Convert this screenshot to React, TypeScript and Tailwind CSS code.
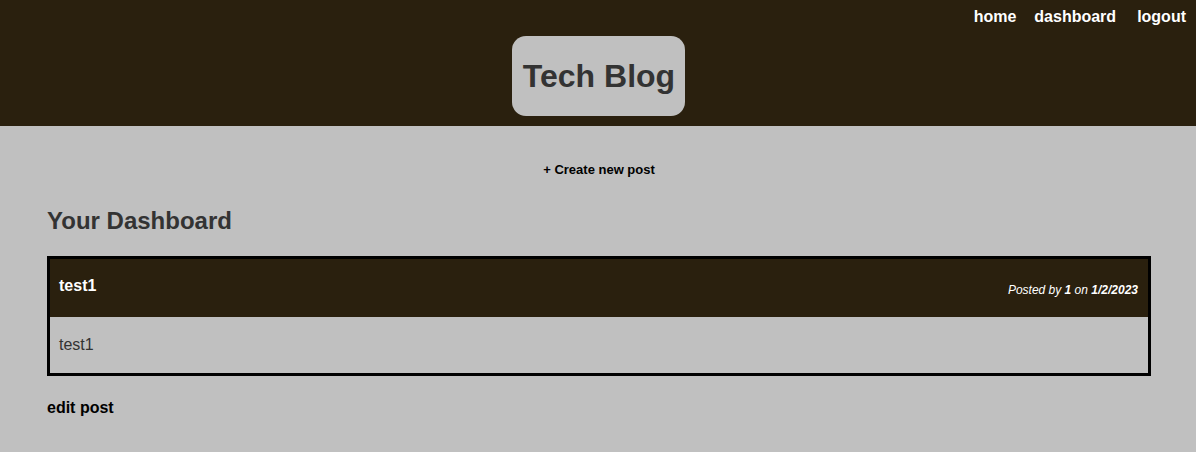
export default function App() {
  return (
    <div className="min-h-[452px] bg-[#c0c0c0] font-['Liberation_Sans',Arial,sans-serif]">
      {/* Header */}
      <header className="relative h-[126px] bg-[#2a200e] flex justify-center">
        <nav className="absolute right-[10px] top-[7px] flex text-[16px] font-bold text-white leading-[20px]">
          <a className="ml-[18px]">home</a>
          <a className="ml-[18px]">dashboard</a>
          <a className="ml-[21px]">logout</a>
        </nav>
        <div className="mt-[36px] h-[80px] w-[173px] rounded-[14px] bg-[#c0c0c0] flex items-center justify-center pl-[2px]">
          <h1 className="text-[32px] font-bold text-[#333] leading-none">Tech Blog</h1>
        </div>
      </header>

      {/* Body */}
      <main className="pl-[47px] pr-[45px] pt-[34px]">
        <div className="flex justify-center">
          <a className="text-[13px] font-bold text-black leading-[20px]">+ Create new post</a>
        </div>
        <h2 className="mt-[27px] text-[24px] font-bold text-[#333] leading-[28px]">Your Dashboard</h2>

        <div className="mt-[21px] border-[3px] border-black">
          <div className="h-[58px] bg-[#2a200e] flex items-center justify-between px-[9px]">
            <span className="text-[16px] font-bold text-white -mt-[5px]">test1</span>
            <span className="text-[12px] italic text-white mt-[4px] mr-[1px]">
              Posted by <b>1</b> on <b>1/2/2023</b>
            </span>
          </div>
          <div className="h-[56px] flex items-center px-[9px]">
            <p className="text-[16px] text-[#333]">test1</p>
          </div>
        </div>

        <div className="mt-[22px] text-[16px] font-bold text-black leading-[20px]">edit post</div>
      </main>
    </div>
  );
}
